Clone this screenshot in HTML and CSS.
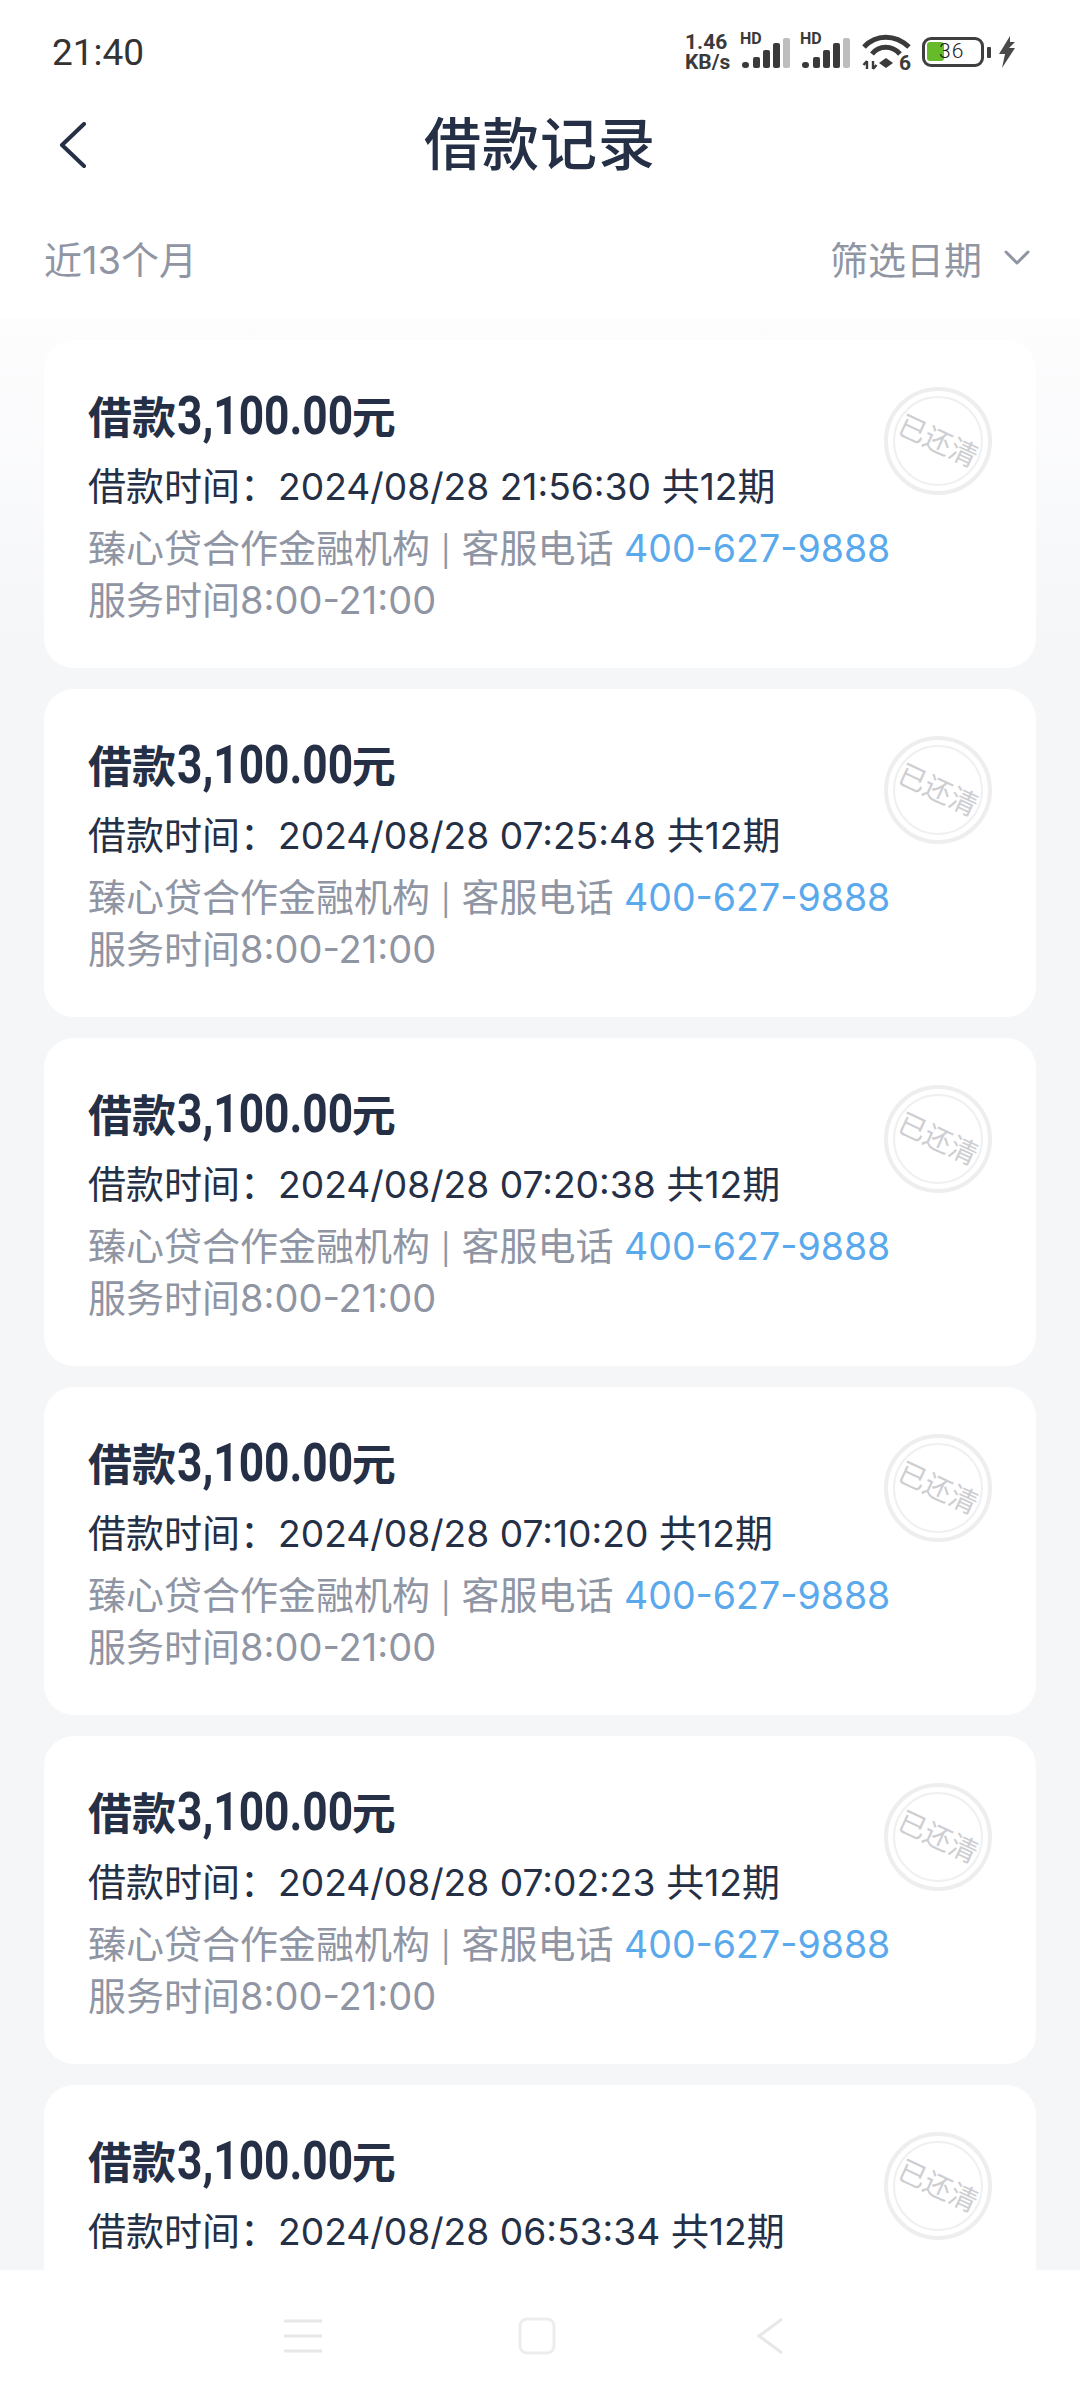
FILE: index.html
```html
<!DOCTYPE html>
<html lang="zh-CN">
<head>
<meta charset="utf-8">
<title>借款记录</title>
<link rel="stylesheet" href="styles.css">
</head>
<body>
<div class="page">
  <div class="statusbar">
    <span class="clock">21:40</span>
    <div class="status-icons">
      <div class="speed"><span>1.46</span><span>KB/s</span></div>
      <div class="signal"><span class="hd">HD</span>
        <svg class="bars" width="50" height="30" viewBox="0 0 50 30"><g fill="#3a3a3a"><rect x="2" y="24" width="7" height="6" rx="3"/><rect x="13" y="19" width="7" height="11" rx="2"/><rect x="23" y="12" width="7" height="18" rx="2"/><rect x="33" y="5" width="7" height="25" rx="2"/></g><rect x="43" y="0" width="7" height="30" rx="2" fill="#bdbdbd"/></svg>
      </div>
      <div class="signal"><span class="hd">HD</span>
        <svg class="bars" width="50" height="30" viewBox="0 0 50 30"><g fill="#3a3a3a"><rect x="2" y="24" width="7" height="6" rx="3"/><rect x="13" y="19" width="7" height="11" rx="2"/><rect x="23" y="12" width="7" height="18" rx="2"/><rect x="33" y="5" width="7" height="25" rx="2"/></g><rect x="43" y="0" width="7" height="30" rx="2" fill="#bdbdbd"/></svg>
      </div>
      <svg class="wifi" width="50" height="42" viewBox="0 0 50 42"><g fill="none" stroke="#3a3a3a" stroke-width="5"><path d="M2 13C14 0 33 0 47 13"/><path d="M10 20C17 11 30 11 38 20"/></g><path d="M24 24l7 5-7 5-7-5z" fill="#3a3a3a"/><g stroke="#3a3a3a" stroke-width="2.400" fill="none"><path d="M5 27v8M1.500 31l3.500-4M11 27v8M14.500 31l-3.500 4"/></g><text class="wifi-six" x="37" y="36">6</text></svg>
      <div class="battery"><div class="battery-body"><span class="battery-fill"></span><span class="battery-num">36</span></div><span class="battery-nub"></span></div>
      <svg class="bolt" width="18" height="32" viewBox="0 0 18 32"><path d="M12 0L1 18h6l-3 14L17 12h-6l6-6-5 0z" fill="#4a4a4a"/></svg>
    </div>
  </div>
  <header class="titlebar">
    <svg class="back" width="28" height="46" viewBox="0 0 28 46"><path d="M26 2L4 23l22 21" fill="none" stroke="#252f45" stroke-width="4" stroke-linecap="round" stroke-linejoin="round"/></svg>
    <h1 class="title">借款记录</h1>
  </header>
  <div class="filterbar">
    <span>近13个月</span>
    <div class="filter-date"><span>筛选日期</span>
      <svg width="26" height="15" viewBox="0 0 26 15"><path d="M2 2l11 11L24 2" fill="none" stroke="#8f95a3" stroke-width="3" stroke-linecap="round" stroke-linejoin="round"/></svg>
    </div>
  </div>
  <main class="list">
    <article class="card">
      <div class="amount">借款<b>3,100.00</b>元</div>
      <div class="time">借款时间：<span class="num">2024/08/28 21:56:30</span> 共<span class="num">12</span>期</div>
      <div class="info">臻心贷合作金融机构 <span class="sep">|</span> 客服电话 <span class="phone">400-627-9888</span></div>
      <div class="info">服务时间8:00-21:00</div>
      <div class="stamp"><span>已还清</span></div>
    </article>
    <article class="card">
      <div class="amount">借款<b>3,100.00</b>元</div>
      <div class="time">借款时间：<span class="num">2024/08/28 07:25:48</span> 共<span class="num">12</span>期</div>
      <div class="info">臻心贷合作金融机构 <span class="sep">|</span> 客服电话 <span class="phone">400-627-9888</span></div>
      <div class="info">服务时间8:00-21:00</div>
      <div class="stamp"><span>已还清</span></div>
    </article>
    <article class="card">
      <div class="amount">借款<b>3,100.00</b>元</div>
      <div class="time">借款时间：<span class="num">2024/08/28 07:20:38</span> 共<span class="num">12</span>期</div>
      <div class="info">臻心贷合作金融机构 <span class="sep">|</span> 客服电话 <span class="phone">400-627-9888</span></div>
      <div class="info">服务时间8:00-21:00</div>
      <div class="stamp"><span>已还清</span></div>
    </article>
    <article class="card">
      <div class="amount">借款<b>3,100.00</b>元</div>
      <div class="time">借款时间：<span class="num">2024/08/28 07:10:20</span> 共<span class="num">12</span>期</div>
      <div class="info">臻心贷合作金融机构 <span class="sep">|</span> 客服电话 <span class="phone">400-627-9888</span></div>
      <div class="info">服务时间8:00-21:00</div>
      <div class="stamp"><span>已还清</span></div>
    </article>
    <article class="card">
      <div class="amount">借款<b>3,100.00</b>元</div>
      <div class="time">借款时间：<span class="num">2024/08/28 07:02:23</span> 共<span class="num">12</span>期</div>
      <div class="info">臻心贷合作金融机构 <span class="sep">|</span> 客服电话 <span class="phone">400-627-9888</span></div>
      <div class="info">服务时间8:00-21:00</div>
      <div class="stamp"><span>已还清</span></div>
    </article>
    <article class="card">
      <div class="amount">借款<b>3,100.00</b>元</div>
      <div class="time">借款时间：<span class="num">2024/08/28 06:53:34</span> 共<span class="num">12</span>期</div>
      <div class="stamp"><span>已还清</span></div>
    </article>
  </main>
  <nav class="navbar">
    <svg class="nav-menu" width="40" height="34" viewBox="0 0 40 34"><path d="M1 2h38M1 17h38M1 32h38" stroke="#e6e7e9" stroke-width="3" fill="none"/></svg>
    <svg class="nav-home" width="38" height="38" viewBox="0 0 38 38"><rect x="2" y="2" width="34" height="34" rx="7" fill="#fff" stroke="#eceded" stroke-width="3"/></svg>
    <svg class="nav-back" width="28" height="38" viewBox="0 0 28 38"><path d="M26 2L3 19l23 17" fill="none" stroke="#e6e7e9" stroke-width="3"/></svg>
  </nav>
</div>
</body>
</html>
```
FILE: styles.css
```css
* { box-sizing: border-box; }
html, body { margin: 0; padding: 0; }
body { font-family: Inter, "Noto Sans CJK SC", sans-serif; }
.page { width: 1080px; height: 2400px; display: flex; flex-direction: column; background: #fff; overflow: hidden; }
.statusbar { height: 100px; flex: none; display: flex; justify-content: space-between; align-items: center; padding: 4px 64px 0 52px; }
.clock { font-family: Roboto, sans-serif; font-size: 37px; color: #333; }
.status-icons { display: flex; align-items: center; }
.speed { display: flex; flex-direction: column; font-family: Roboto, sans-serif; font-weight: 700; font-size: 21px; line-height: 20px; color: #3a3a3a; width: 55px; }
.signal { position: relative; width: 60px; height: 36px; }
.hd { position: absolute; left: 0; top: -3px; font-family: Roboto, sans-serif; font-weight: 700; font-size: 16px; line-height: 16px; color: #3a3a3a; }
.bars { position: absolute; left: 0; top: 4px; }
.wifi { margin-left: 2px; margin-top: 6px; }
.battery { display: flex; align-items: center; margin-left: 10px; }
.battery-body { position: relative; width: 62px; height: 30px; border: 3.500px solid #3f3f3f; border-radius: 9px; }
.battery-fill { position: absolute; left: 2px; top: 2px; width: 17px; height: 19px; background: #66bb2a; border-radius: 3px; }
.battery-num { position: absolute; left: 14px; top: 0; font-family: Roboto, sans-serif; font-weight: 300; font-size: 21px; line-height: 23px; color: #222; letter-spacing: 1px; }
.battery-nub { width: 4px; height: 11px; margin-left: 3px; background: #3f3f3f; border-radius: 1px; }
.bolt { margin-left: 7px; }
.wifi-six { font-family: Roboto, sans-serif; font-weight: 700; font-size: 21px; fill: #3a3a3a; }
.titlebar { height: 92px; flex: none; position: relative; display: flex; justify-content: center; align-items: center; }
.back { position: absolute; left: 58px; top: 22px; }
.title { margin: 0 0 3px; font-size: 57px; font-weight: 500; line-height: 84px; letter-spacing: 1px; color: #252f45; }
.filterbar { height: 126px; flex: none; padding: 4px 50px 0 44px; display: flex; justify-content: space-between; align-items: center; font-size: 38px; color: #8f95a3; }
.filter-date { display: flex; align-items: center; gap: 22px; }
.list { flex: 1; min-height: 0; overflow: hidden; padding: 22px 44px 0; display: flex; flex-direction: column; gap: 21px; background: linear-gradient(#fdfdfe, #f5f6f8 340px); }
.card { position: relative; flex: none; height: 328px; padding: 47px 44px 0; background: #fff; border-radius: 30px; }
.amount { font-size: 44px; font-weight: 700; line-height: 62px; color: #252f45; white-space: nowrap; }
.amount b { display: inline-block; font-family: Roboto, sans-serif; font-weight: 700; font-size: 54px; line-height: 1; transform: scaleX(.82); transform-origin: left center; margin: 0 -40px 0 1px; }
.time { margin-top: 10px; font-size: 38px; line-height: 54px; color: #252f45; white-space: nowrap; }
.num { font-size: 37.200px; line-height: 1; }
.info { font-size: 38px; line-height: 52px; color: #8f95a3; white-space: nowrap; }
.time + .info { margin-top: 9px; }
.sep { font-size: 30px; line-height: 1; }
.phone { color: #5aa9ec; font-size: 37.500px; line-height: 1; }
.stamp { position: absolute; right: 44px; top: 47px; width: 108px; height: 108px; border: 4px solid #eeeeee; border-radius: 50%; display: flex; align-items: center; justify-content: center; }
.stamp::before { content: ""; position: absolute; inset: 5px; border: 2px solid #f0f0f0; border-radius: 50%; }
.stamp span { position: relative; transform: rotate(25deg); font-size: 28px; line-height: 32px; color: #cdced2; white-space: nowrap; }
.navbar { height: 130px; flex: none; position: relative; background: #fff; }
.nav-menu { position: absolute; left: 283px; top: 49px; }
.nav-home { position: absolute; left: 518px; top: 47px; }
.nav-back { position: absolute; left: 756px; top: 47px; }
```
